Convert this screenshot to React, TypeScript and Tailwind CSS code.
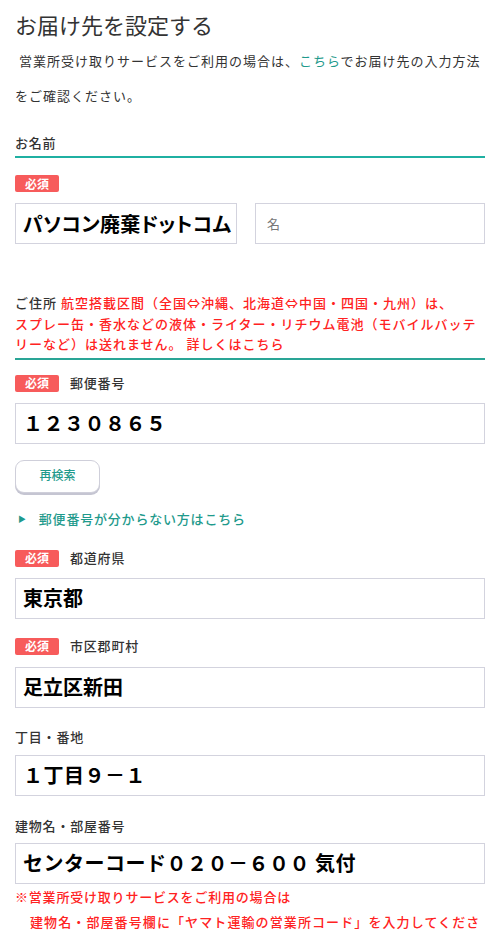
import React from "react";

const font = { fontFamily: '"Noto Sans CJK JP", "Noto Sans", sans-serif' };

// 必須バッジ
function Required() {
    return (
        <span className="inline-flex h-[17px] w-[44px] items-center justify-center rounded-[2px] bg-[#f75b5b] text-[12px] font-bold leading-none text-white">
            必須
        </span>
    );
}

function BadgeLabel({ label }: { label: string }) {
    return (
        <div className="flex h-[17px] items-center gap-[11px]">
            <Required />
            <span className="text-[13px] font-medium tracking-[0.8px] text-[#333]">{label}</span>
        </div>
    );
}

function Field({ value, className = "" }: { value: string; className?: string }) {
    return (
        <div className={`flex h-[41px] items-center overflow-hidden whitespace-nowrap border border-[#d3d3de] bg-white px-[7px] text-[20px] font-bold text-black ${className}`}>
            {value}
        </div>
    );
}

export default function App() {
    return (
        <div className="min-h-screen w-[500px] bg-white px-[15px] text-[#333]" style={font}>
            {/* 見出し */}
            <h1 className="pt-[9px] text-[22px] leading-[30px] font-normal">お届け先を設定する</h1>

            <p className="mt-[4px] text-[13px] leading-[35px] tracking-[1px]">
                &nbsp;営業所受け取りサービスをご利用の場合は、<span className="text-[#1f9a8c]">こちら</span>でお届け先の入力方法<br />をご確認ください。
            </p>

            {/* お名前 */}
            <div className="mt-[20px] border-b-2 border-b-[#1fb0a2] pb-[3px] text-[13px] leading-[20px] font-medium tracking-[0.8px]">お名前</div>
            <div className="mt-[17px] flex">
                <Required />
            </div>
            <div className="mt-[11px] flex gap-[18px]">
                <Field value="パソコン廃棄ドットコム" className="flex-1 [font-feature-settings:'palt'] tracking-[0.3px]" />
                <div className="flex h-[41px] flex-1 items-center border border-[#d3d3de] px-[11px] text-[13px] text-[#777]">名</div>
            </div>

            {/* ご住所 */}
            <div className="mt-[49px] border-b-2 border-b-[#2aa596] pb-[3px] text-[13px] leading-[20.5px] font-medium tracking-[1px]">
                ご住所 <span className="text-[#ff2222]">航空搭載区間（全国⇔沖縄、北海道⇔中国・四国・九州）は、<br />スプレー缶・香水などの液体・ライター・リチウム電池（モバイルバッテ<br />リーなど）は送れません。 詳しくはこちら</span>
            </div>

            <div className="mt-[15px]">
                <BadgeLabel label="郵便番号" />
            </div>
            <Field value="１２３０８６５" className="mt-[11px] tracking-[0.5px]" />

            <button className="mt-[16px] flex h-[33px] w-[85px] items-center justify-center rounded-[9px] border border-[#cfcfda] bg-white pb-[2px] text-[12px] font-medium text-[#1f9a8c] shadow-[0_2px_0_#c5c5d2]">
                再検索
            </button>

            <div className="mt-[16px] flex h-[20px] items-center text-[13px] font-medium tracking-[0.8px] text-[#1f9a8c]">
                <span className="ml-[3px] mr-[12px] text-[8px]">▶</span>
                郵便番号が分からない方はこちら
            </div>

            <div className="mt-[21px]">
                <BadgeLabel label="都道府県" />
            </div>
            <Field value="東京都" className="mt-[11px]" />

            <div className="mt-[19px]">
                <BadgeLabel label="市区郡町村" />
            </div>
            <Field value="足立区新田" className="mt-[12px]" />

            <div className="mt-[19px] text-[13px] leading-[20px] font-medium tracking-[0.8px]">丁目・番地</div>
            <Field value="１丁目９－１" className="mt-[8px] tracking-[0.5px]" />

            <div className="mt-[20px] text-[13px] leading-[20px] font-medium tracking-[0.8px]">建物名・部屋番号</div>
            <Field value="センターコード０２０－６００ 気付" className="mt-[7px] tracking-[0.5px]" />

            <div className="text-[13px] leading-[25px] font-medium text-[#ff2222]">
                <div className="tracking-[0.8px]">※営業所受け取りサービスをご利用の場合は</div>
                <div className="pl-[15px] tracking-[1.1px]">建物名・部屋番号欄に「ヤマト運輸の営業所コード」を入力してください。</div>
            </div>
        </div>
    );
}
